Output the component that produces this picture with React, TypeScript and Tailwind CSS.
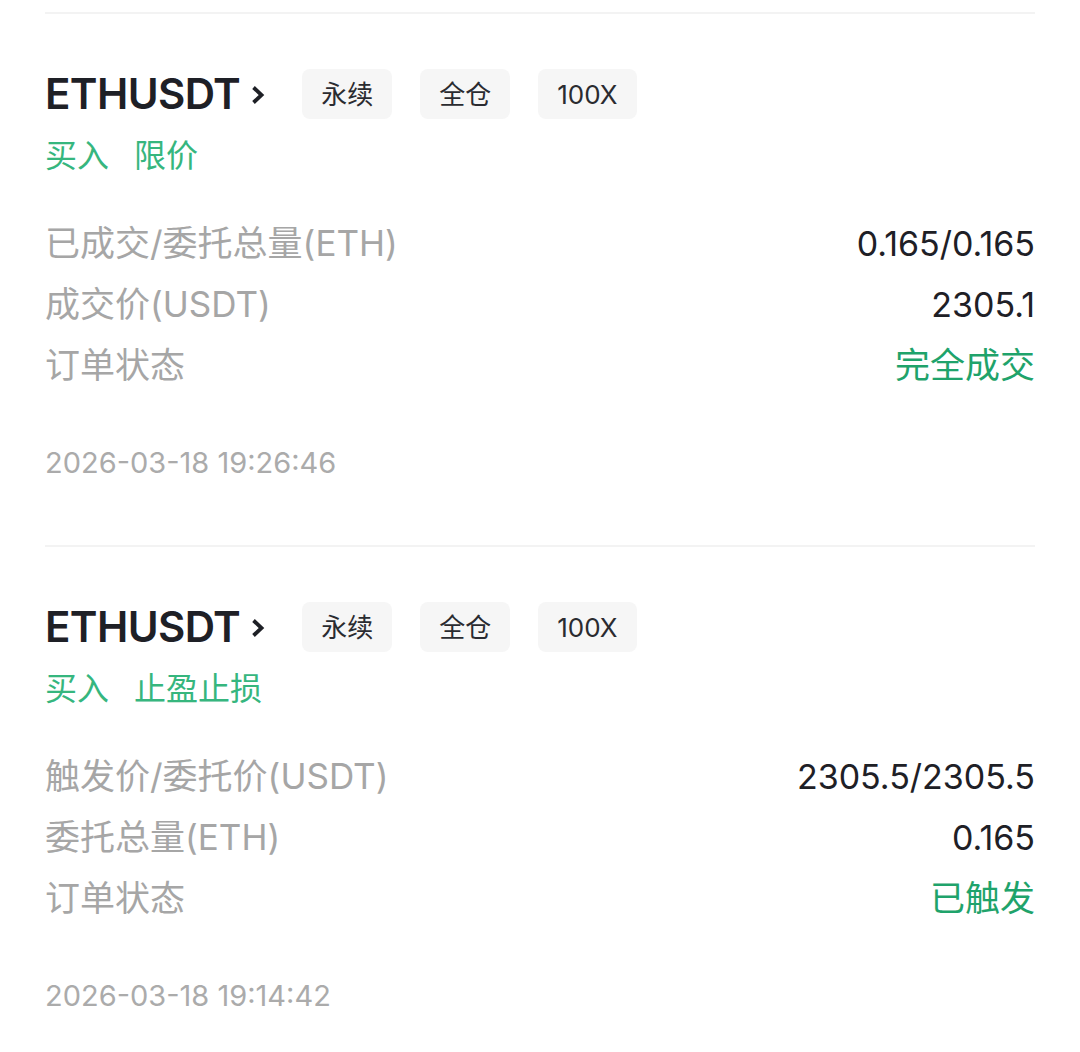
import React from 'react'

type Row = { label: string; value: string; status?: boolean }

type Order = {
  side: string
  kind: string
  rows: Row[]
  time: string
}

const orders: Order[] = [
  {
    side: '买入',
    kind: '限价',
    rows: [
      { label: '已成交/委托总量(ETH)', value: '0.165/0.165' },
      { label: '成交价(USDT)', value: '2305.1' },
      { label: '订单状态', value: '完全成交', status: true },
    ],
    time: '2026-03-18 19:26:46',
  },
  {
    side: '买入',
    kind: '止盈止损',
    rows: [
      { label: '触发价/委托价(USDT)', value: '2305.5/2305.5' },
      { label: '委托总量(ETH)', value: '0.165' },
      { label: '订单状态', value: '已触发', status: true },
    ],
    time: '2026-03-18 19:14:42',
  },
]

const tags = ['永续', '全仓', '100X']

function Chevron() {
  return (
    <svg width="18" height="22" viewBox="0 0 18 22" className="ml-[9px] mt-[2px]">
      <path d="M4.5 3.5 L12.5 11 L4.5 18.5" fill="none" stroke="#1e2026" strokeWidth="3.8" />
    </svg>
  )
}

function OrderCard({ order }: { order: Order }) {
  return (
    <div className="border-t-2 border-[#f3f3f3] pt-[55px] pb-[62px]">
      <div className="flex items-center h-[50px]">
        <span className="text-[42px] font-semibold text-[#1e2026] tracking-[-0.6px] leading-none">ETHUSDT</span>
        <Chevron />
        <div className="flex gap-[28px] ml-[35px]">
          {tags.map((t) => (
            <span
              key={t}
              className="h-[50px] px-[19px] rounded-[8px] bg-[#f6f6f6] flex items-center text-[26px] text-[#2a2b30]"
            >
              {t}
            </span>
          ))}
        </div>
      </div>

      <div className="mt-[17px] h-[40px] flex items-center gap-[25px] text-[32px] text-[#36b67e]">
        <span>{order.side}</span>
        <span>{order.kind}</span>
      </div>

      <div className="mt-[37px]">
        {order.rows.map((r) => (
          <div key={r.label} className="h-[61px] flex items-center justify-between">
            <span className="text-[35px] text-[#a6a6a6]">{r.label}</span>
            <span className={r.status ? 'text-[35px] text-[#1fa36b]' : 'text-[34px] text-[#1e2026]'}>{r.value}</span>
          </div>
        ))}
      </div>

      <div className="mt-[47px] h-[40px] flex items-center text-[29px] text-[#ababab]">{order.time}</div>
    </div>
  )
}

export default function App() {
  return (
    <div
      className="w-[1080px] h-[1052px] overflow-hidden bg-white px-[45px] pt-[12px]"
      style={{ fontFamily: 'Inter, "Noto Sans CJK SC", sans-serif' }}
    >
      {orders.map((o) => (
        <OrderCard key={o.time} order={o} />
      ))}
    </div>
  )
}
